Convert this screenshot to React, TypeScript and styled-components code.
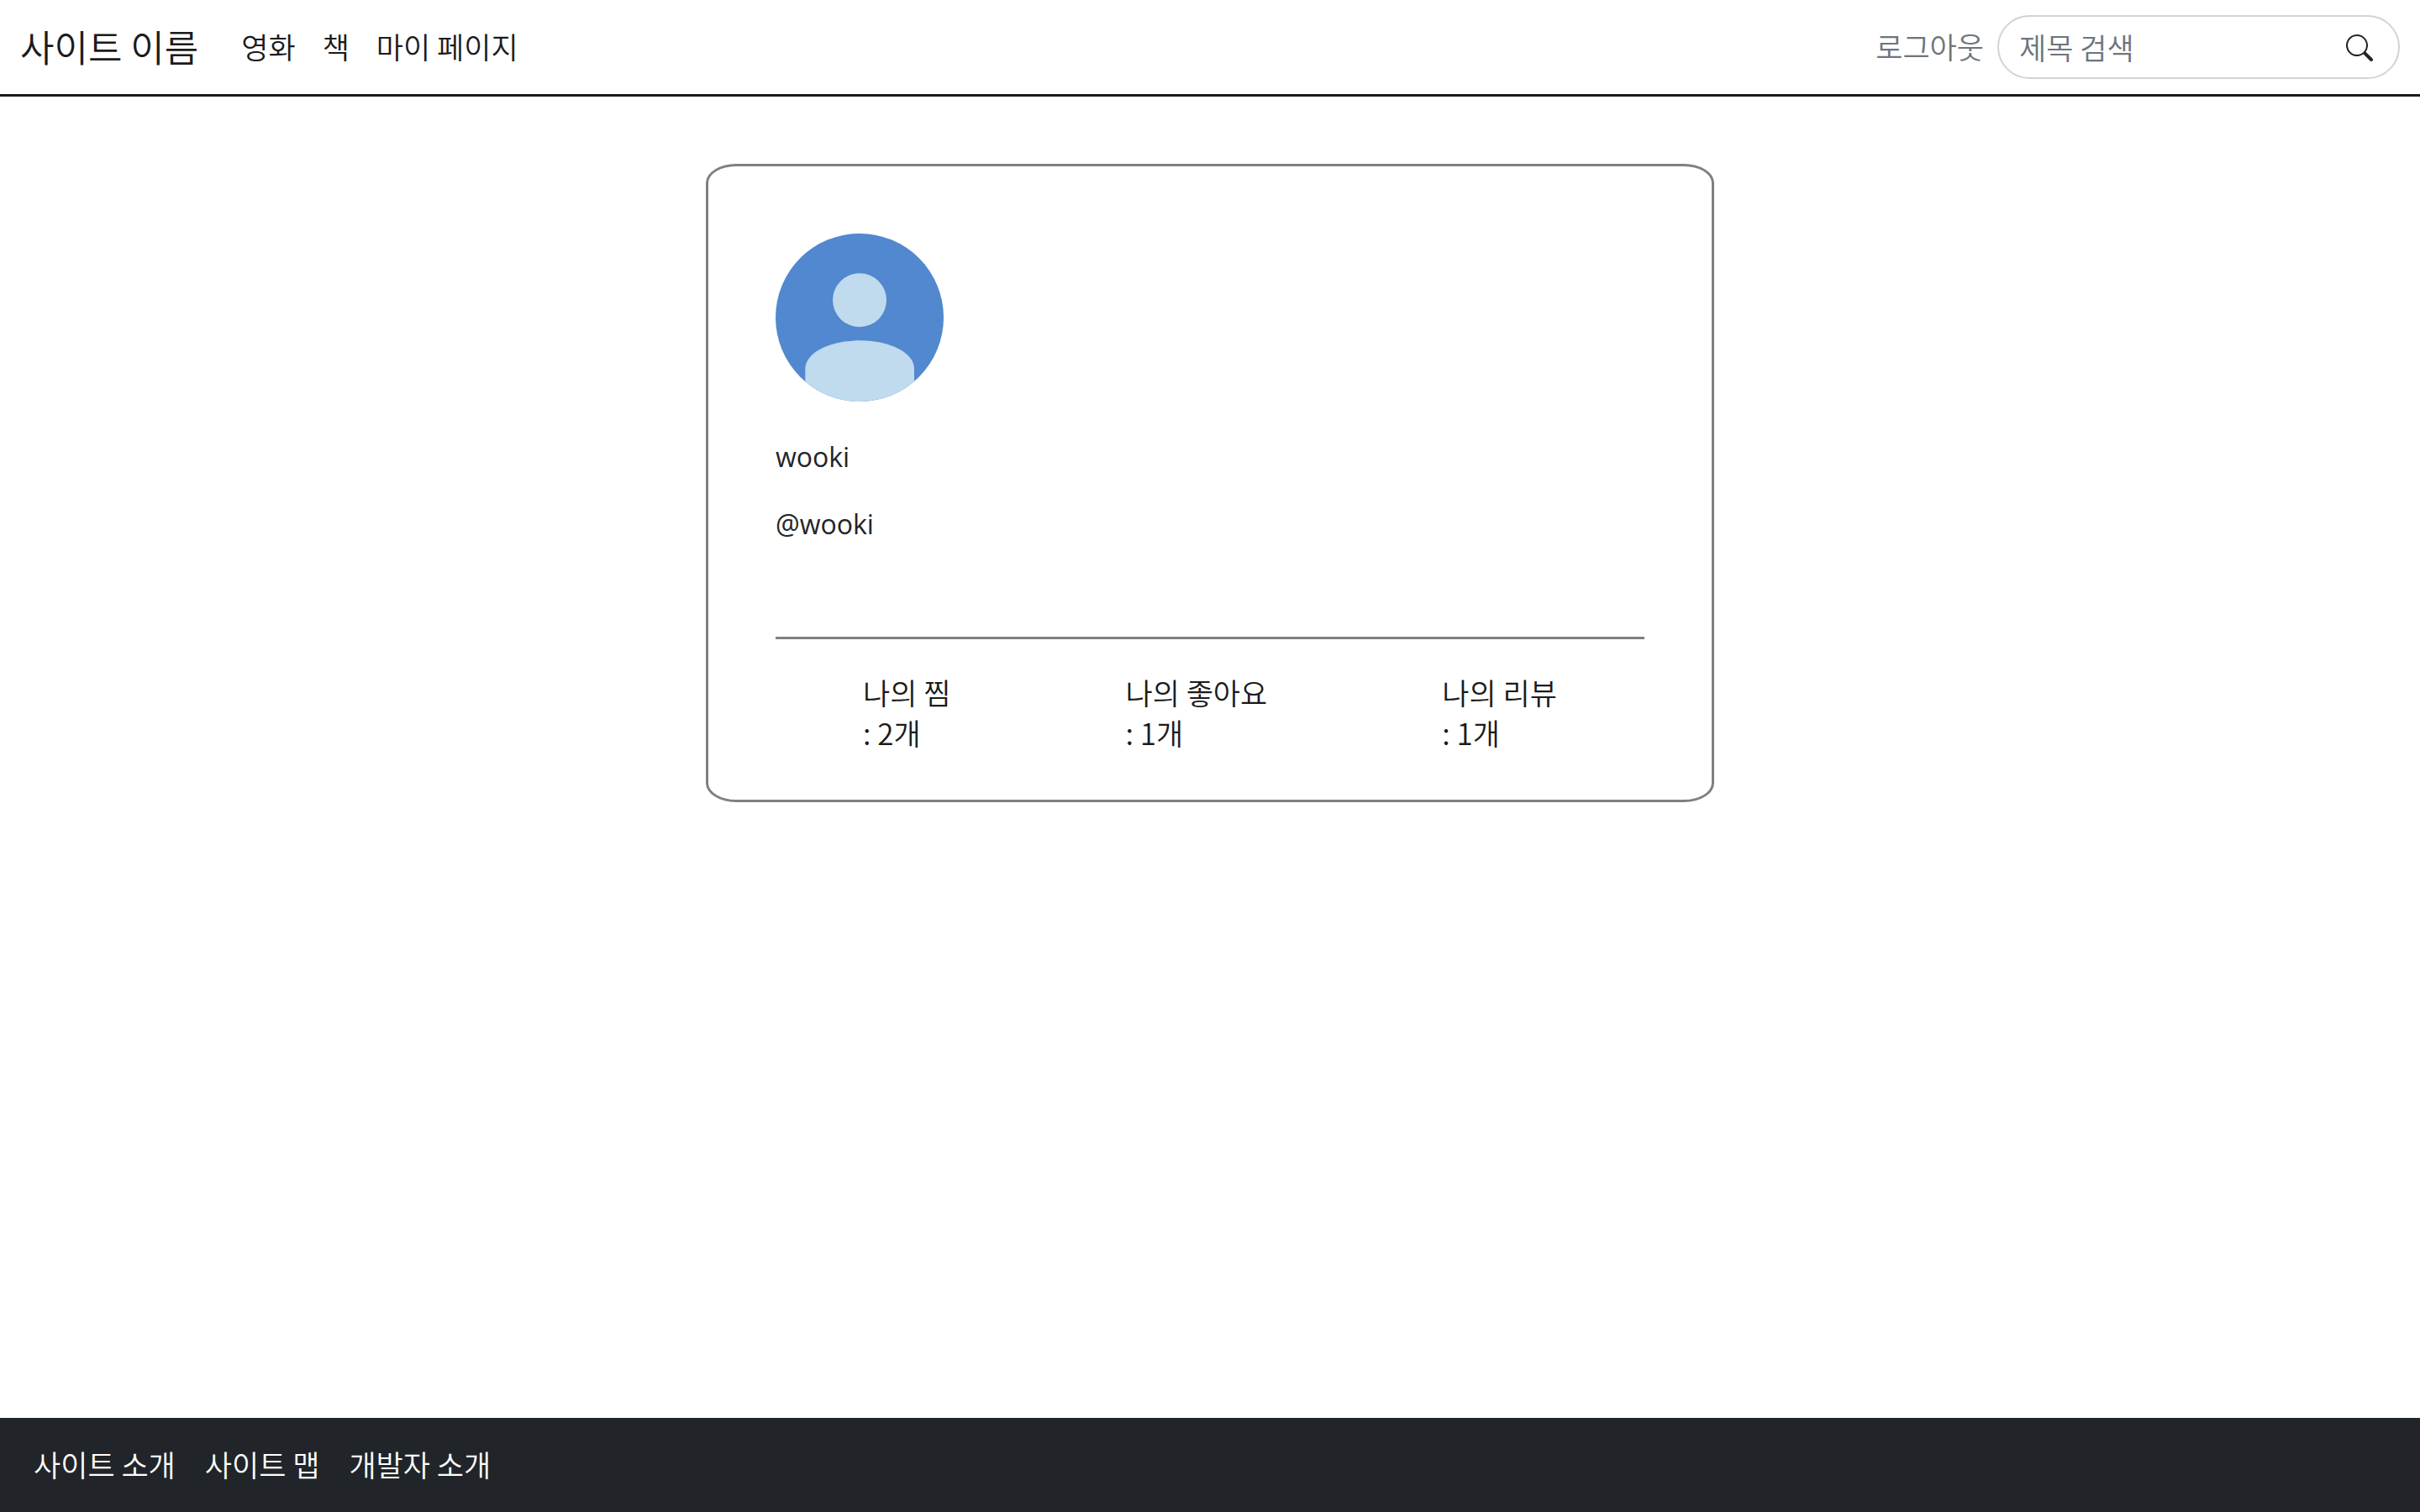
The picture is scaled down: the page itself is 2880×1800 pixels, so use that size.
import React from "react";
import styled, { createGlobalStyle } from "styled-components";

const GlobalStyle = createGlobalStyle`
  *, *::before, *::after { box-sizing: border-box; }
  body {
    margin: 0;
    background: #fff;
    color: #212529;
    font-family: "Noto Sans CJK KR", sans-serif;
    font-size: 35px;
    font-weight: 350;
    line-height: 48px;
  }
`;

const Page = styled.div`
  display: flex;
  flex-direction: column;
  min-height: 100vh;
`;

const Header = styled.header`
  display: flex;
  align-items: center;
  justify-content: space-between;
  padding: 16px 24px;
  border-bottom: 3px solid #1b1b1b;
`;

const Nav = styled.nav`
  display: flex;
  align-items: center;
`;

const Links = styled.div<{ $gap: number }>`
  display: flex;
  align-items: center;
  gap: ${({ $gap }) => $gap}px;
`;

const Brand = styled.a`
  padding: 9px 0 11px;
  margin-right: 35px;
  color: #1b1b1b;
  font-size: 44px;
  line-height: 60px;
  text-decoration: none;
`;

const NavLink = styled.a<{ $color: string }>`
  padding: 0 16px 2px;
  color: ${({ $color }) => $color};
  text-decoration: none;
`;

const SearchForm = styled.form`
  display: flex;
  align-items: center;
  width: 479px;
  height: 76px;
  padding: 0 30px 0 24px;
  border: 2px solid #ced4da;
  border-radius: 38px;
`;

const SearchInput = styled.input`
  flex: 1;
  min-width: 0;
  height: 50px;
  padding: 0 0 2px;
  border: 0;
  outline: 0;
  background: transparent;
  color: #212529;
  font: inherit;

  &::placeholder {
    color: #6c757d;
    opacity: 1;
  }
`;

const SearchButton = styled.button`
  display: flex;
  padding: 2px 0 0;
  border: 0;
  background: transparent;
  color: #212529;
  cursor: pointer;
`;

const Main = styled.main`
  flex: 1;
  padding: 80px 24px;
`;

const Card = styled.section`
  width: 100%;
  max-width: 1200px;
  margin: 0 auto;
  padding: 80px 80px 56px;
  border: 3px solid #808080;
  border-radius: 3%;
`;

const Avatar = styled.svg`
  display: block;
  width: 200px;
  height: 200px;
  margin-bottom: 42px;
  border-radius: 50%;
`;

const UserText = styled.p`
  margin: 0 0 32px;
  font-family: "Open Sans", "Noto Sans", sans-serif;
  font-size: 32px;
  font-weight: 400;
`;

const Stats = styled.div`
  display: flex;
  justify-content: space-around;
  margin-top: 110px;
  padding-top: 39px;
  border-top: 3px solid #808080;
`;

const StatLink = styled.a`
  color: #1b1b1b;
  text-decoration: none;
`;

const StatLine = styled.span`
  display: block;
`;

const Footer = styled.footer`
  display: flex;
  align-items: center;
  min-height: 112px;
  padding: 16px 24px;
  background: #212529;
`;

const stats = [
  { label: "나의 찜", count: 2 },
  { label: "나의 좋아요", count: 1 },
  { label: "나의 리뷰", count: 1 },
];

export default function App() {
  return (
    <Page>
      <GlobalStyle />
      <Header>
        <Nav>
          <Brand href="#">사이트 이름</Brand>
          <Links $gap={0}>
            {["영화", "책", "마이 페이지"].map((label) => (
              <NavLink key={label} href="#" $color="#1b1b1b">
                {label}
              </NavLink>
            ))}
          </Links>
        </Nav>
        <Nav>
          <NavLink href="#" $color="#6c757d">
            로그아웃
          </NavLink>
          <SearchForm role="search" onSubmit={(e) => e.preventDefault()}>
            <SearchInput type="text" placeholder="제목 검색" aria-label="제목 검색" />
            <SearchButton type="submit" aria-label="검색">
              <svg width="32" height="32" viewBox="0 0 16 16" fill="currentColor" aria-hidden="true">
                <path d="M11.742 10.344a6.5 6.5 0 1 0-1.397 1.398h-.001c.03.04.062.078.098.115l3.85 3.85a1 1 0 0 0 1.415-1.414l-3.85-3.85a1.007 1.007 0 0 0-.115-.1zM12 6.5a5.5 5.5 0 1 1-11 0 5.5 5.5 0 0 1 11 0z" />
              </svg>
            </SearchButton>
          </SearchForm>
        </Nav>
      </Header>
      <Main>
        <Card>
          <Avatar viewBox="0 0 200 200" aria-hidden="true">
            <rect width="200" height="200" fill="#5188cf" />
            <circle cx="100" cy="79.3" r="32" fill="#c0daee" />
            <path d="M35.3 200V161C35.3 142 64 127.3 100 127.3S165 142 165 161V200Z" fill="#c0daee" />
          </Avatar>
          <UserText>wooki</UserText>
          <UserText>@wooki</UserText>
          <Stats>
            {stats.map(({ label, count }) => (
              <StatLink key={label} href="#">
                <StatLine>{label}</StatLine>
                <StatLine>: {count}개</StatLine>
              </StatLink>
            ))}
          </Stats>
        </Card>
      </Main>
      <Footer>
        <Links $gap={3}>
          {["사이트 소개", "사이트 맵", "개발자 소개"].map((label) => (
            <NavLink key={label} href="#" $color="#ffffff">
              {label}
            </NavLink>
          ))}
        </Links>
      </Footer>
    </Page>
  );
}
